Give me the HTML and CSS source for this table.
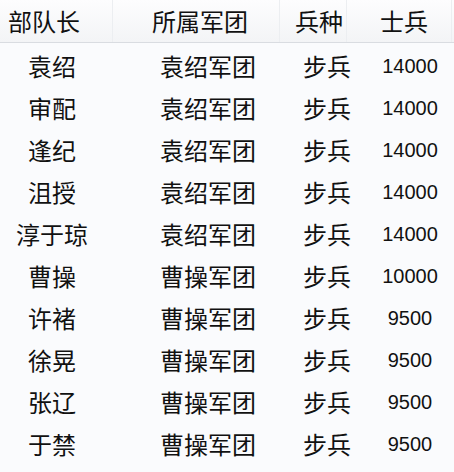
FILE: index.html
```html
<!DOCTYPE html>
<html lang="zh-CN">
<head>
<meta charset="utf-8">
<title>部队</title>
<link rel="stylesheet" href="styles.css">
</head>
<body>
<div class="table">
  <div class="head">
    <div class="h h1">部队长</div>
    <div class="h h2">所属军团</div>
    <div class="h h3">兵种</div>
    <div class="h h4">士兵</div>
  </div>
  <div class="rows">
    <div class="row"><div class="c c1">袁绍</div><div class="c c2">袁绍军团</div><div class="c c3">步兵</div><div class="c c4">14000</div></div>
    <div class="row"><div class="c c1">审配</div><div class="c c2">袁绍军团</div><div class="c c3">步兵</div><div class="c c4">14000</div></div>
    <div class="row"><div class="c c1">逢纪</div><div class="c c2">袁绍军团</div><div class="c c3">步兵</div><div class="c c4">14000</div></div>
    <div class="row"><div class="c c1">沮授</div><div class="c c2">袁绍军团</div><div class="c c3">步兵</div><div class="c c4">14000</div></div>
    <div class="row"><div class="c c1">淳于琼</div><div class="c c2">袁绍军团</div><div class="c c3">步兵</div><div class="c c4">14000</div></div>
    <div class="row"><div class="c c1">曹操</div><div class="c c2">曹操军团</div><div class="c c3">步兵</div><div class="c c4">10000</div></div>
    <div class="row"><div class="c c1">许褚</div><div class="c c2">曹操军团</div><div class="c c3">步兵</div><div class="c c4">9500</div></div>
    <div class="row"><div class="c c1">徐晃</div><div class="c c2">曹操军团</div><div class="c c3">步兵</div><div class="c c4">9500</div></div>
    <div class="row"><div class="c c1">张辽</div><div class="c c2">曹操军团</div><div class="c c3">步兵</div><div class="c c4">9500</div></div>
    <div class="row"><div class="c c1">于禁</div><div class="c c2">曹操军团</div><div class="c c3">步兵</div><div class="c c4">9500</div></div>
  </div>
</div>
</body>
</html>
```
FILE: styles.css
```css
html, body {
  margin: 0;
  padding: 0;
  background: #fafbfd;
}
.table {
  width: 454px;
  height: 472px;
  font-family: "Noto Sans CJK SC", "Noto Sans", sans-serif;
  color: #111;
  overflow: hidden;
}
.head {
  display: grid;
  grid-template-columns: 113px 167px 67px 105px 2px;
  height: 42px;
  background: linear-gradient(#fdfdfe, #f3f4f6);
  border-bottom: 1px solid #d9dce1;
}
.h {
  font-size: 24px;
  line-height: 42px;
  white-space: nowrap;
  border-right: 1px solid #eceef1;
  box-sizing: border-box;
}
.h1 { padding-left: 8px; }
.h2 { padding-left: 39px; }
.h3 { padding-left: 15px; }
.h4 { padding-left: 33px; }
.rows {
  padding-top: 2px;
}
.row {
  display: grid;
  grid-template-columns: 104px 176px 86px 88px;
  height: 42px;
  align-items: center;
}
.c {
  font-size: 24px;
  line-height: 42px;
  white-space: nowrap;
}
.c1 { text-align: center; }
.c2 { padding-left: 56px; }
.c3 { padding-left: 23px; }
.c4 {
  text-align: center;
  font-family: "Liberation Sans", "DejaVu Sans", sans-serif;
  font-size: 20px;
}
```
